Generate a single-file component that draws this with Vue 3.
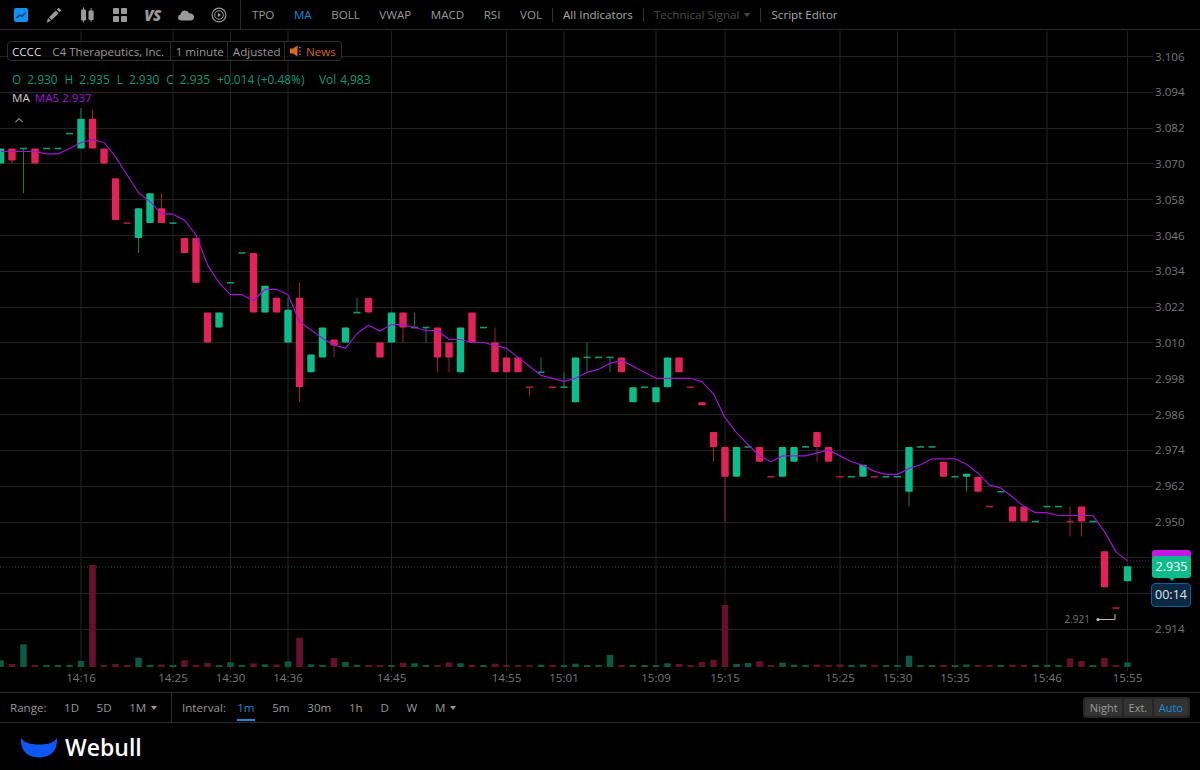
<template>
  <div class="page">
    <header class="toolbar">
      <div class="tools">
        <button class="tool" type="button">
          <svg width="16" height="16" viewBox="0 0 16 16">
            <rect x="1" y="1" width="14" height="14" rx="2" fill="#0f93f0" />
            <path d="M3.5 11 6.5 8 9 9.5 12.5 5.5" fill="none" stroke="#0b3f78" stroke-width="1.5" />
          </svg>
        </button>
        <button class="tool" type="button">
          <svg width="16" height="16" viewBox="0 0 16 16" fill="#9a9a9a">
            <path d="M.6 15.6 2.2 11 5 13.9z" />
            <path d="M3 10.2 9.8 3.4 12.6 6.2 5.8 13z" />
            <path d="M10.7 2.5 12 1.2q.6-.5 1.2 0l1.6 1.6q.5.6 0 1.2l-1.3 1.3z" />
          </svg>
        </button>
        <button class="tool" type="button">
          <svg width="16" height="16" viewBox="0 0 16 16" fill="#9a9a9a">
            <rect x="2" y="2.5" width="5" height="11" rx="1.2" />
            <rect x="4" y="0.5" width="1" height="15" />
            <rect x="9.5" y="3.5" width="5.2" height="9.5" rx="1.2" />
            <rect x="11.6" y="1" width="1" height="14" />
          </svg>
        </button>
        <button class="tool" type="button">
          <svg width="16" height="16" viewBox="0 0 16 16" fill="#9a9a9a">
            <rect x="1" y="1" width="6" height="6" rx="1" />
            <rect x="9" y="1" width="6" height="6" rx="1" />
            <rect x="1" y="9" width="6" height="6" rx="1" />
            <rect x="9" y="9" width="6" height="6" rx="1" />
          </svg>
        </button>
        <button class="tool vs" type="button">VS</button>
        <button class="tool" type="button">
          <svg width="18" height="16" viewBox="0 0 18 16" fill="#9a9a9a">
            <path d="M4.5 13.5Q1 13.3 1 10.4 1 8 3.5 7.4 4.3 3.6 8 3.6 11 3.6 12.2 6.3 16.8 6.3 17 10.2 17 13.3 13.6 13.5z" />
          </svg>
        </button>
        <button class="tool" type="button">
          <svg width="16" height="16" viewBox="0 0 16 16" fill="none" stroke="#9a9a9a">
            <circle cx="8" cy="8" r="6.9" stroke-width="1.2" />
            <circle cx="8" cy="8" r="4.3" stroke-width="1" />
            <path d="M6.8 5.8v4.4L10 8z" fill="#9a9a9a" stroke="none" />
          </svg>
        </button>
      </div>
      <nav class="indicators">
        <span v-for="item in indicators" :key="item" :class="{ active: item === 'MA' }">{{ item }}</span>
      </nav>
      <span class="rule"></span>
      <span class="link">All Indicators</span>
      <span class="rule"></span>
      <span class="link muted">Technical Signal<i class="caret"></i></span>
      <span class="rule"></span>
      <span class="link">Script Editor</span>
    </header>

    <main class="chart">
      <svg class="plot" width="1200" height="662" viewBox="0 30 1200 662">
        <line v-for="g in hGrid" :key="g" x1="0" x2="1153" :y1="g + 0.5" :y2="g + 0.5" class="grid" />
        <template v-for="t in times" :key="t.label">
          <line v-if="t.i === 7" :x1="xOf(t.i)" :x2="xOf(t.i)" y1="31" y2="60" class="grid" />
          <line :x1="xOf(t.i)" :x2="xOf(t.i)" :y1="t.i === 7 ? 108 : 31" y2="671" class="grid" />
          <text :x="xOf(t.i)" y="681.5" text-anchor="middle" class="axis">{{ t.label }}</text>
        </template>
        <text v-for="p in priceLabels" :key="p.label" x="1155" :y="p.y + 4.5" class="axis">{{ p.label }}</text>

        <line x1="0" x2="1152" y1="567" y2="567" class="last-price" />
        <line x1="1130" x2="1152" y1="561" y2="561" class="last-ma" />

        <rect
          v-for="v in volumeBars"
          :key="'v' + v.i"
          :x="v.x"
          :y="667 - v.h"
          width="6.5"
          :height="v.h"
          :fill="v.up ? '#0a5a45' : '#66102f'"
        />

        <g v-for="c in candleRows" :key="c.i">
          <line :x1="c.x" :x2="c.x" :y1="c.high" :y2="c.low" :stroke="c.up ? '#0f7a5c' : '#9c1c46'" />
          <rect
            v-if="c.doji"
            :x="c.x - 3.5"
            :y="c.top - 0.8"
            width="7"
            height="1.6"
            :fill="c.up ? '#0e9a74' : '#b01a4c'"
          />
          <rect
            v-else
            :x="c.x - 3.7"
            :y="c.top"
            width="7.4"
            :height="c.height"
            rx="1"
            :fill="c.up ? '#0cbc8b' : '#e2225a'"
          />
        </g>

        <polyline :points="maPoints" class="ma-line" />

        <text x="1090" y="623" text-anchor="end" class="low-label">2.921</text>
        <circle cx="1098" cy="619.5" r="1.5" fill="#ccc" />
        <path d="M1098 619.5H1115V614" fill="none" stroke="#bbb" />
      </svg>

      <div class="legend">
        <div class="title-box">
          <span class="seg symbol">CCCC<em>C4 Therapeutics, Inc.</em></span>
          <span class="seg minute">1 minute</span>
          <span class="seg adjusted">Adjusted</span>
          <span class="seg news">
            <svg width="13" height="12" viewBox="0 0 13 12" fill="#d96a1c">
              <path d="M0 3.5h3L7.5.5v11L3 8.5H0z" />
              <rect x="9" y="2" width="1.6" height="1.2" />
              <rect x="9" y="5.4" width="1.6" height="1.2" />
              <rect x="9" y="8.8" width="1.6" height="1.2" />
            </svg>
            News
          </span>
        </div>
        <div class="ohlc">
          <span>O</span><span class="ohlc-val">2.930</span>
          <span>H</span><span class="ohlc-val">2.935</span>
          <span>L</span><span class="ohlc-val">2.930</span>
          <span>C</span><span class="ohlc-val">2.935</span>
          <span class="change">+0.014 (+0.48%)</span>
          <span>Vol</span><span>4,983</span>
        </div>
        <div class="ma-row">MA <span>MA5 2.937</span></div>
        <svg class="fold" width="10" height="6" viewBox="0 0 10 6">
          <path d="M1.5 5 5 1.5 8.5 5" fill="none" stroke="#888" stroke-width="1.1" />
        </svg>
      </div>

      <div class="tags">
        <div class="tag-ma"></div>
        <div class="tag-price">2.935</div>
        <div class="tag-time">00:14</div>
      </div>
    </main>

    <footer class="rangebar">
      <div class="range">
        <span>Range:</span>
        <span class="opt">1D</span>
        <span class="opt">5D</span>
        <span class="opt">1M<i class="caret"></i></span>
      </div>
      <div class="interval">
        <span class="int-label">Interval:</span>
        <span v-for="o in intervals" :key="o" class="opt" :class="{ selected: o === '1m' }">{{ o }}</span>
        <span class="opt">M<i class="caret"></i></span>
      </div>
      <div class="session">
        <span>Night</span>
        <span>Ext.</span>
        <span class="on">Auto</span>
      </div>
    </footer>

    <div class="brand">
      <svg width="36" height="21" viewBox="0 0 36 21">
        <path d="M.5 1C2.5 5.5 9 7.5 18 7.5S33.5 5.5 35.5 1C36.5 3 36 6.5 35 10 33 16.5 26 20.5 18 20.5S3 16.5 1 10C0 6.5-.5 3 .5 1z" fill="#0f57f2" />
      </svg>
      <span>Webull</span>
    </div>
  </div>
</template>

<script setup>
import { computed } from 'vue'

const indicators = ['TPO', 'MA', 'BOLL', 'VWAP', 'MACD', 'RSI', 'VOL']
const intervals = ['1m', '5m', '30m', '1h', 'D', 'W']

// up, open, close, high (0 = body), low (0 = body)
const candles = [
  [1, 3.07, 3.075, 0, 0], [0, 3.075, 3.071, 0, 3.07], [1, 3.075, 3.075, 0, 3.06], [0, 3.075, 3.07, 0, 0],
  [1, 3.075, 3.075, 0, 0], [1, 3.075, 3.075, 0, 0], [1, 3.08, 3.08, 0, 0], [1, 3.075, 3.085, 3.0885, 0],
  [0, 3.085, 3.075, 3.088, 0], [0, 3.075, 3.07, 0, 0], [0, 3.065, 3.051, 0, 0], [0, 3.05, 3.05, 0, 0],
  [1, 3.045, 3.055, 0, 3.04], [1, 3.05, 3.06, 0, 0], [0, 3.055, 3.05, 3.06, 0], [1, 3.05, 3.05, 0, 0],
  [0, 3.045, 3.04, 0, 0], [0, 3.045, 3.03, 0, 0], [0, 3.02, 3.01, 0, 0], [1, 3.015, 3.02, 0, 0],
  [1, 3.03, 3.03, 0, 0], [1, 3.04, 3.04, 0, 0], [0, 3.04, 3.02, 0, 0], [1, 3.02, 3.029, 0, 0],
  [0, 3.025, 3.02, 0, 0], [1, 3.01, 3.021, 3.025, 0], [0, 3.025, 2.995, 3.03, 2.99], [1, 3.0, 3.006, 0, 0],
  [1, 3.005, 3.015, 0, 0], [0, 3.011, 3.009, 0, 3.005], [1, 3.01, 3.015, 0, 0], [1, 3.02, 3.02, 3.025, 0],
  [0, 3.025, 3.02, 0, 0], [0, 3.01, 3.005, 0, 0], [1, 3.01, 3.02, 0, 0], [0, 3.02, 3.015, 0, 3.01],
  [1, 3.015, 3.015, 3.02, 0], [1, 3.015, 3.015, 0, 3.01], [0, 3.015, 3.005, 0, 3.0], [0, 3.01, 3.005, 0, 3.0],
  [1, 3.0, 3.015, 0, 0], [0, 3.02, 3.01, 0, 0], [1, 3.015, 3.015, 0, 0], [0, 3.01, 3.0, 3.015, 0],
  [0, 3.005, 3.0, 0, 0], [0, 3.005, 3.0, 0, 0], [0, 2.995, 2.995, 0, 2.992], [1, 3.0, 3.0, 3.005, 0],
  [0, 2.995, 2.995, 0, 0], [1, 2.995, 2.995, 3.0, 0], [1, 2.99, 3.005, 0, 0], [1, 3.005, 3.005, 3.01, 3.0],
  [1, 3.005, 3.005, 0, 0], [1, 3.005, 3.005, 0, 3.0], [0, 3.005, 3.0, 0, 0], [1, 2.99, 2.995, 0, 0],
  [1, 2.995, 2.995, 0, 0], [1, 2.99, 2.995, 0, 0], [1, 2.995, 3.005, 0, 0], [0, 3.005, 3.0, 0, 0],
  [0, 2.995, 2.995, 0, 0], [0, 2.99, 2.989, 0, 0], [0, 2.98, 2.975, 0, 2.97], [0, 2.975, 2.965, 0, 2.95],
  [1, 2.965, 2.975, 0, 0], [1, 2.975, 2.975, 0, 0], [0, 2.975, 2.97, 0, 0], [0, 2.965, 2.965, 0, 0],
  [1, 2.965, 2.975, 0, 0], [1, 2.97, 2.975, 0, 0], [1, 2.975, 2.975, 0, 0], [0, 2.98, 2.975, 0, 2.97],
  [0, 2.975, 2.97, 0, 0], [0, 2.965, 2.965, 0, 0], [1, 2.965, 2.965, 0, 0], [1, 2.965, 2.969, 0, 0],
  [0, 2.965, 2.965, 0, 0], [1, 2.965, 2.965, 0, 0], [1, 2.965, 2.965, 0, 0], [1, 2.96, 2.975, 0, 2.955],
  [1, 2.975, 2.975, 0, 0], [1, 2.975, 2.975, 0, 0], [0, 2.97, 2.965, 0, 0], [1, 2.965, 2.965, 0, 0],
  [1, 2.965, 2.966, 0, 2.96], [0, 2.965, 2.96, 0, 0], [0, 2.955, 2.955, 0, 0], [1, 2.96, 2.96, 0, 0],
  [0, 2.955, 2.95, 0, 0], [0, 2.955, 2.95, 0, 0], [1, 2.95, 2.95, 0, 0], [1, 2.955, 2.955, 0, 0],
  [1, 2.955, 2.955, 0, 0], [0, 2.95, 2.95, 2.955, 2.945], [0, 2.955, 2.95, 0, 2.945], [1, 2.95, 2.95, 0, 0],
  [0, 2.94, 2.928, 0, 0], [0, 2.921, 2.921, 0, 0], [1, 2.93, 2.935, 0, 0],
]

const volumes = [
  6.7, 3, 22.7, 2, 2, 2, 2, 6, 102, 2, 3, 2, 9.3, 2, 2.5, 2, 6.7, 2, 4, 2, 4.7, 2, 3.7, 2.7, 2.5, 5.7, 29, 2.7, 2, 9, 5,
  2.3, 2, 2, 2, 4.3, 3.7, 2, 2, 4.7, 3.7, 2, 2, 3.3, 2, 2, 1.7, 2.3, 2, 2, 3.3, 2, 2, 12, 2, 2, 2, 2, 3.7, 3, 2, 5, 7, 62,
  3, 4, 6, 2, 4.3, 2.3, 2, 2.5, 2, 2.5, 2, 2.5, 2, 2, 2, 11.3, 2, 2, 2, 2, 2.5, 2, 2, 2, 2.3, 2, 2, 2.3, 2, 8.7, 6, 2, 9, 2, 4.7,
]

const times = [
  { i: 7, label: '14:16' }, { i: 15, label: '14:25' }, { i: 20, label: '14:30' }, { i: 25, label: '14:36' },
  { i: 34, label: '14:45' }, { i: 44, label: '14:55' }, { i: 49, label: '15:01' }, { i: 57, label: '15:09' },
  { i: 63, label: '15:15' }, { i: 73, label: '15:25' }, { i: 78, label: '15:30' }, { i: 83, label: '15:35' },
  { i: 91, label: '15:46' }, { i: 98, label: '15:55' },
]

const xOf = (i) => 0.5 + i * 11.5
const yOf = (p) => 56 + (3.106 - p) * 2984

const hGrid = Array.from({ length: 17 }, (_, n) => Math.round(56 + n * 35.81))

const priceLabels = Array.from({ length: 17 }, (_, n) => ({
  label: (3.106 - n * 0.012).toFixed(3),
  y: 56 + n * 35.81,
})).filter((_, n) => n !== 14 && n !== 15)

const candleRows = computed(() =>
  candles.map(([up, open, close, high, low], i) => {
    const hi = Math.max(open, close)
    const lo = Math.min(open, close)
    return {
      i,
      up,
      x: xOf(i),
      top: yOf(hi),
      height: yOf(lo) - yOf(hi),
      doji: open === close,
      high: yOf(high || hi),
      low: yOf(low || lo),
    }
  }),
)

const volumeBars = computed(() =>
  volumes.map((h, i) => ({ i, h, x: xOf(i) - 3.25, up: candles[i][0] })),
)

const maPoints = computed(() =>
  candles
    .map((_, i) => {
      // the first candles have no full window, the chart starts mid-session
      const value =
        i < 4 ? 3.074 : candles.slice(i - 4, i + 1).reduce((sum, c) => sum + c[2], 0) / 5
      return `${xOf(i)},${yOf(value).toFixed(1)}`
    })
    .join(' '),
)
</script>

<style scoped>
.page {
  display: flex;
  flex-direction: column;
  width: 1200px;
  height: 770px;
  overflow: hidden;
  background: #000;
  color: #999;
  font-family: "Open Sans", "Noto Sans", sans-serif;
  font-size: 11.6px;
}

.toolbar {
  display: flex;
  align-items: center;
  flex: none;
  height: 30px;
  box-sizing: border-box;
  border-bottom: 1px solid #2a2a2a;
}

.tools {
  display: flex;
  align-items: center;
  width: 241px;
  height: 29px;
  box-sizing: border-box;
  padding-left: 4px;
  border-right: 1px solid #2a2a2a;
}

.tool {
  display: flex;
  align-items: center;
  justify-content: center;
  width: 33px;
  height: 29px;
  padding: 0;
  border: 0;
  background: none;
  font-family: inherit;
  color: #9a9a9a;
}

.vs {
  font-size: 15px;
  font-style: italic;
  font-weight: 800;
  letter-spacing: -0.5px;
}

.indicators {
  display: flex;
  gap: 19.5px;
  margin: -1px 0 0 11px;
}

.indicators .active {
  color: #1c8ad6;
}

.rule {
  width: 1px;
  height: 14px;
  margin: 0 10px;
  background: #333;
}

.link {
  color: #aaa;
}

.link.muted {
  color: #4a4a4a;
}

.caret {
  display: inline-block;
  margin-left: 5px;
  border: 3px solid transparent;
  border-top: 4px solid currentColor;
  border-bottom: 0;
  vertical-align: 2px;
}

.chart {
  position: relative;
  flex: none;
  height: 662px;
}

.plot {
  display: block;
}

.grid {
  stroke: #242424;
  stroke-width: 1;
}

.axis {
  fill: #777;
  font-size: 11.6px;
}

.last-price {
  stroke: #0c5a44;
  stroke-dasharray: 1 2;
}

.last-ma {
  stroke: #5a1a6a;
  stroke-dasharray: 1 2;
}

.ma-line {
  fill: none;
  stroke: #9f14cf;
  stroke-width: 1.2;
  stroke-linejoin: round;
}

.low-label {
  fill: #777;
  font-size: 10px;
}

.legend {
  position: absolute;
  top: 11px;
  left: 7px;
}

.title-box {
  display: flex;
  align-items: center;
  width: fit-content;
  height: 20px;
  box-sizing: border-box;
  border: 1px solid #2e2e2e;
  border-radius: 4px;
  background: rgba(0, 0, 0, 0.65);
}

.seg {
  display: flex;
  align-items: center;
  height: 100%;
  padding: 0 5px;
  border-left: 1px solid #2a2a2a;
}

.seg.symbol {
  padding: 0 5.5px 0 4px;
  border-left: 0;
  color: #ddd;
}

.seg.minute {
  padding-right: 3.5px;
}

.seg.adjusted {
  padding: 0 3.5px 0 4.5px;
}

.seg em {
  margin-left: 11px;
  font-style: normal;
  color: #999;
}

.seg.news {
  gap: 3px;
  color: #d0661e;
}

.ohlc {
  display: flex;
  margin: 10px 0 0 5px;
  color: #0a9a7c;
  font-size: 11.9px;
}

.ohlc-val {
  margin: 0 7px 0 6px;
}

.change {
  margin: 0 14.5px 0 0;
}

.ohlc span:last-child {
  margin-left: 4px;
}

.ma-row {
  margin: 3px 0 0 5px;
  color: #ccc;
}

.ma-row span {
  margin-left: 2px;
  color: #a415d8;
}

.fold {
  display: block;
  margin: 12px 0 0 7px;
}

.tags {
  position: absolute;
  top: 520px;
  left: 1152px;
  width: 39px;
  color: #fff;
  text-align: center;
  font-size: 12.5px;
}

.tag-ma {
  height: 8px;
  border-radius: 3px 3px 0 0;
  background: #c517e8;
}

.tag-price {
  position: relative;
  height: 22px;
  margin-top: -2px;
  line-height: 22px;
  border-radius: 3px;
  background: #0cbc8b;
}

.tag-price::after {
  content: "";
  position: absolute;
  top: 100%;
  left: 17px;
  border: 3px solid transparent;
  border-top-color: #0cbc8b;
}

.tag-time {
  height: 24px;
  margin: 5px 0 0 -1px;
  width: 40px;
  box-sizing: border-box;
  line-height: 22px;
  border: 1px solid #0f5f96;
  border-radius: 4px;
  background: #0a2a44;
  color: #e4e4e4;
}

.rangebar {
  display: flex;
  align-items: center;
  flex: none;
  height: 31px;
  box-sizing: border-box;
  border-top: 1px solid #2a2a2a;
  border-bottom: 1px solid #2a2a2a;
}

.range {
  display: flex;
  align-items: center;
  gap: 17.5px;
  width: 172px;
  height: 100%;
  box-sizing: border-box;
  padding-left: 10px;
  border-right: 1px solid #2a2a2a;
}

.interval {
  display: flex;
  align-items: center;
  gap: 17.7px;
  height: 100%;
  padding-left: 10px;
}

.int-label {
  margin-right: -6.5px;
}

.opt {
  position: relative;
}

.opt.selected {
  color: #1c8ad6;
}

.opt.selected::after {
  content: "";
  position: absolute;
  left: 0;
  right: 0;
  top: 19px;
  height: 1.5px;
  background: #1c8ad6;
}

.session {
  display: flex;
  gap: 2px;
  margin-left: auto;
  margin-right: 10px;
  padding: 2px;
  border-radius: 3px;
  background: #262626;
  font-size: 11px;
}

.session span {
  padding: 0 4.5px;
  line-height: 17px;
  border-radius: 2px;
  background: #333;
}

.session .on {
  padding: 0 5px;
  color: #1c8ad6;
}

.brand {
  display: flex;
  align-items: center;
  gap: 8px;
  padding: 14px 0 0 21px;
  color: #fff;
  font-size: 23px;
  font-weight: 600;
  line-height: 21px;
}
</style>

<style>
html,
body {
  margin: 0;
  background: #000;
}
</style>
